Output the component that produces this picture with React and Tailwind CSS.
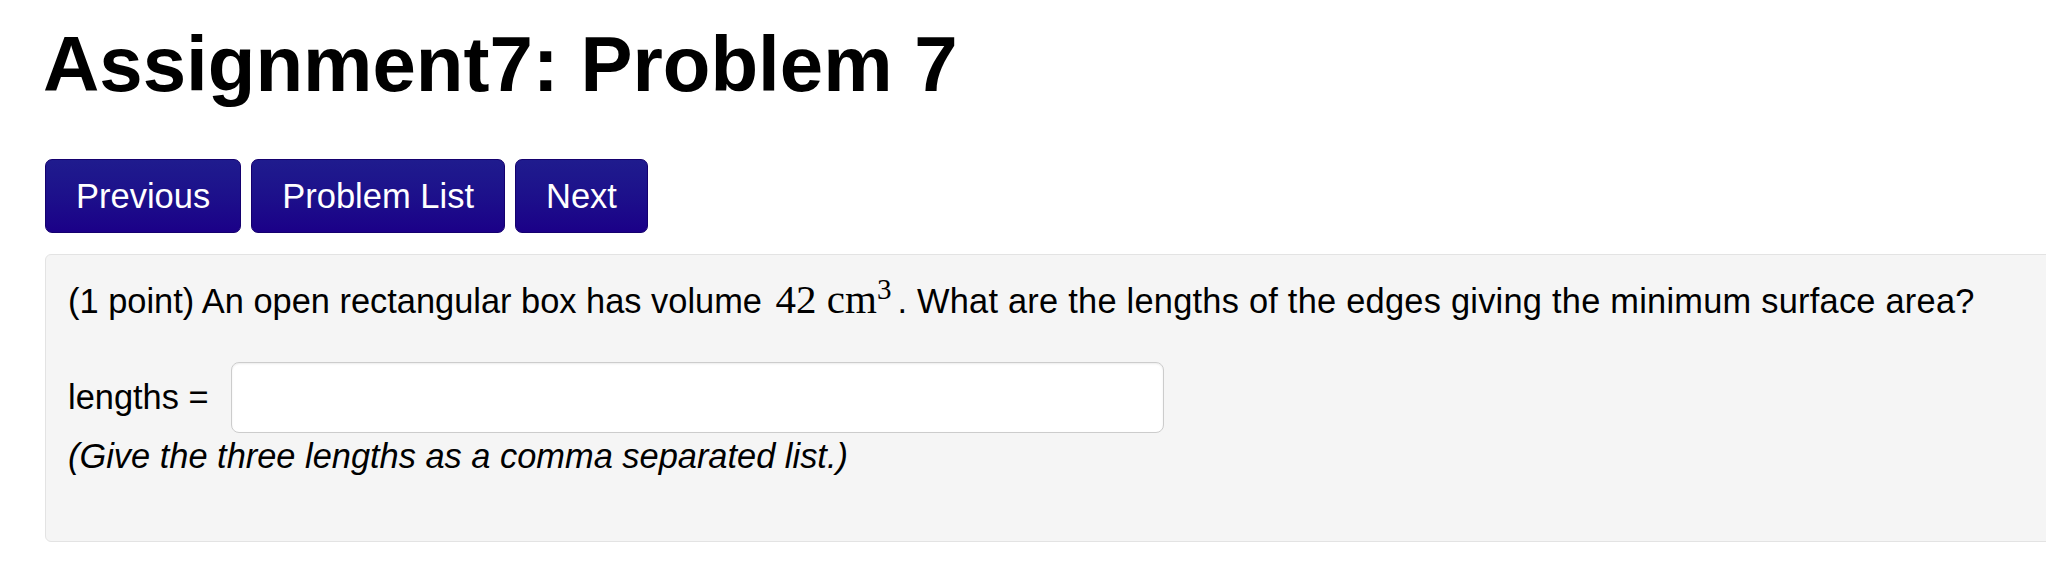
const NavButton = ({ children }) => (
  <button className="h-[74px] rounded-[7px] border border-[#14006e] bg-gradient-to-b from-[#1f1b8e] to-[#1b0088] px-[30px] text-[34.5px] leading-none text-white">
    {children}
  </button>
);

export default function App() {
  return (
    <div className="min-h-screen w-full overflow-hidden bg-white font-['Liberation_Sans',Arial,sans-serif] text-black">
      <div className="pl-[45px]">
        <h1 className="ml-[-2px] mt-[25px] text-[78px] font-bold leading-none">
          Assignment7: Problem 7
        </h1>

        <div className="mt-[56px] flex gap-[10px]">
          <NavButton>Previous</NavButton>
          <NavButton>Problem List</NavButton>
          <NavButton>Next</NavButton>
        </div>

        <div className="mt-[21px] w-[2040px] rounded-[6px] border border-[#e3e3e3] bg-[#f5f5f5] pb-[65px] pl-[22px] pt-[22px] text-[34.4px]">
          <p className="leading-[48px]">
            (1 point) An open rectangular box has volume{" "}
            <span className="ml-[4px] font-['Liberation_Serif','Times_New_Roman',serif] text-[41px] leading-none">
              42&nbsp;cm<sup className="text-[29px]">3</sup>
            </span>
            <span className="ml-[6px] tracking-[0.24px]">
              . What are the lengths of the edges giving the minimum surface area?
            </span>
          </p>

          <div className="mt-[37px] flex items-center gap-[22px]">
            <span className="leading-[39px]">lengths =</span>
            <input
              type="text"
              className="h-[71px] w-[933px] rounded-[8px] border border-[#cccccc] bg-white px-3 text-[34px] shadow-[inset_0_1px_2px_rgba(0,0,0,0.08)] outline-none"
            />
          </div>

          <p className="mt-[4px] italic leading-[39px]">
            (Give the three lengths as a comma separated list.)
          </p>
        </div>
      </div>
    </div>
  );
}
